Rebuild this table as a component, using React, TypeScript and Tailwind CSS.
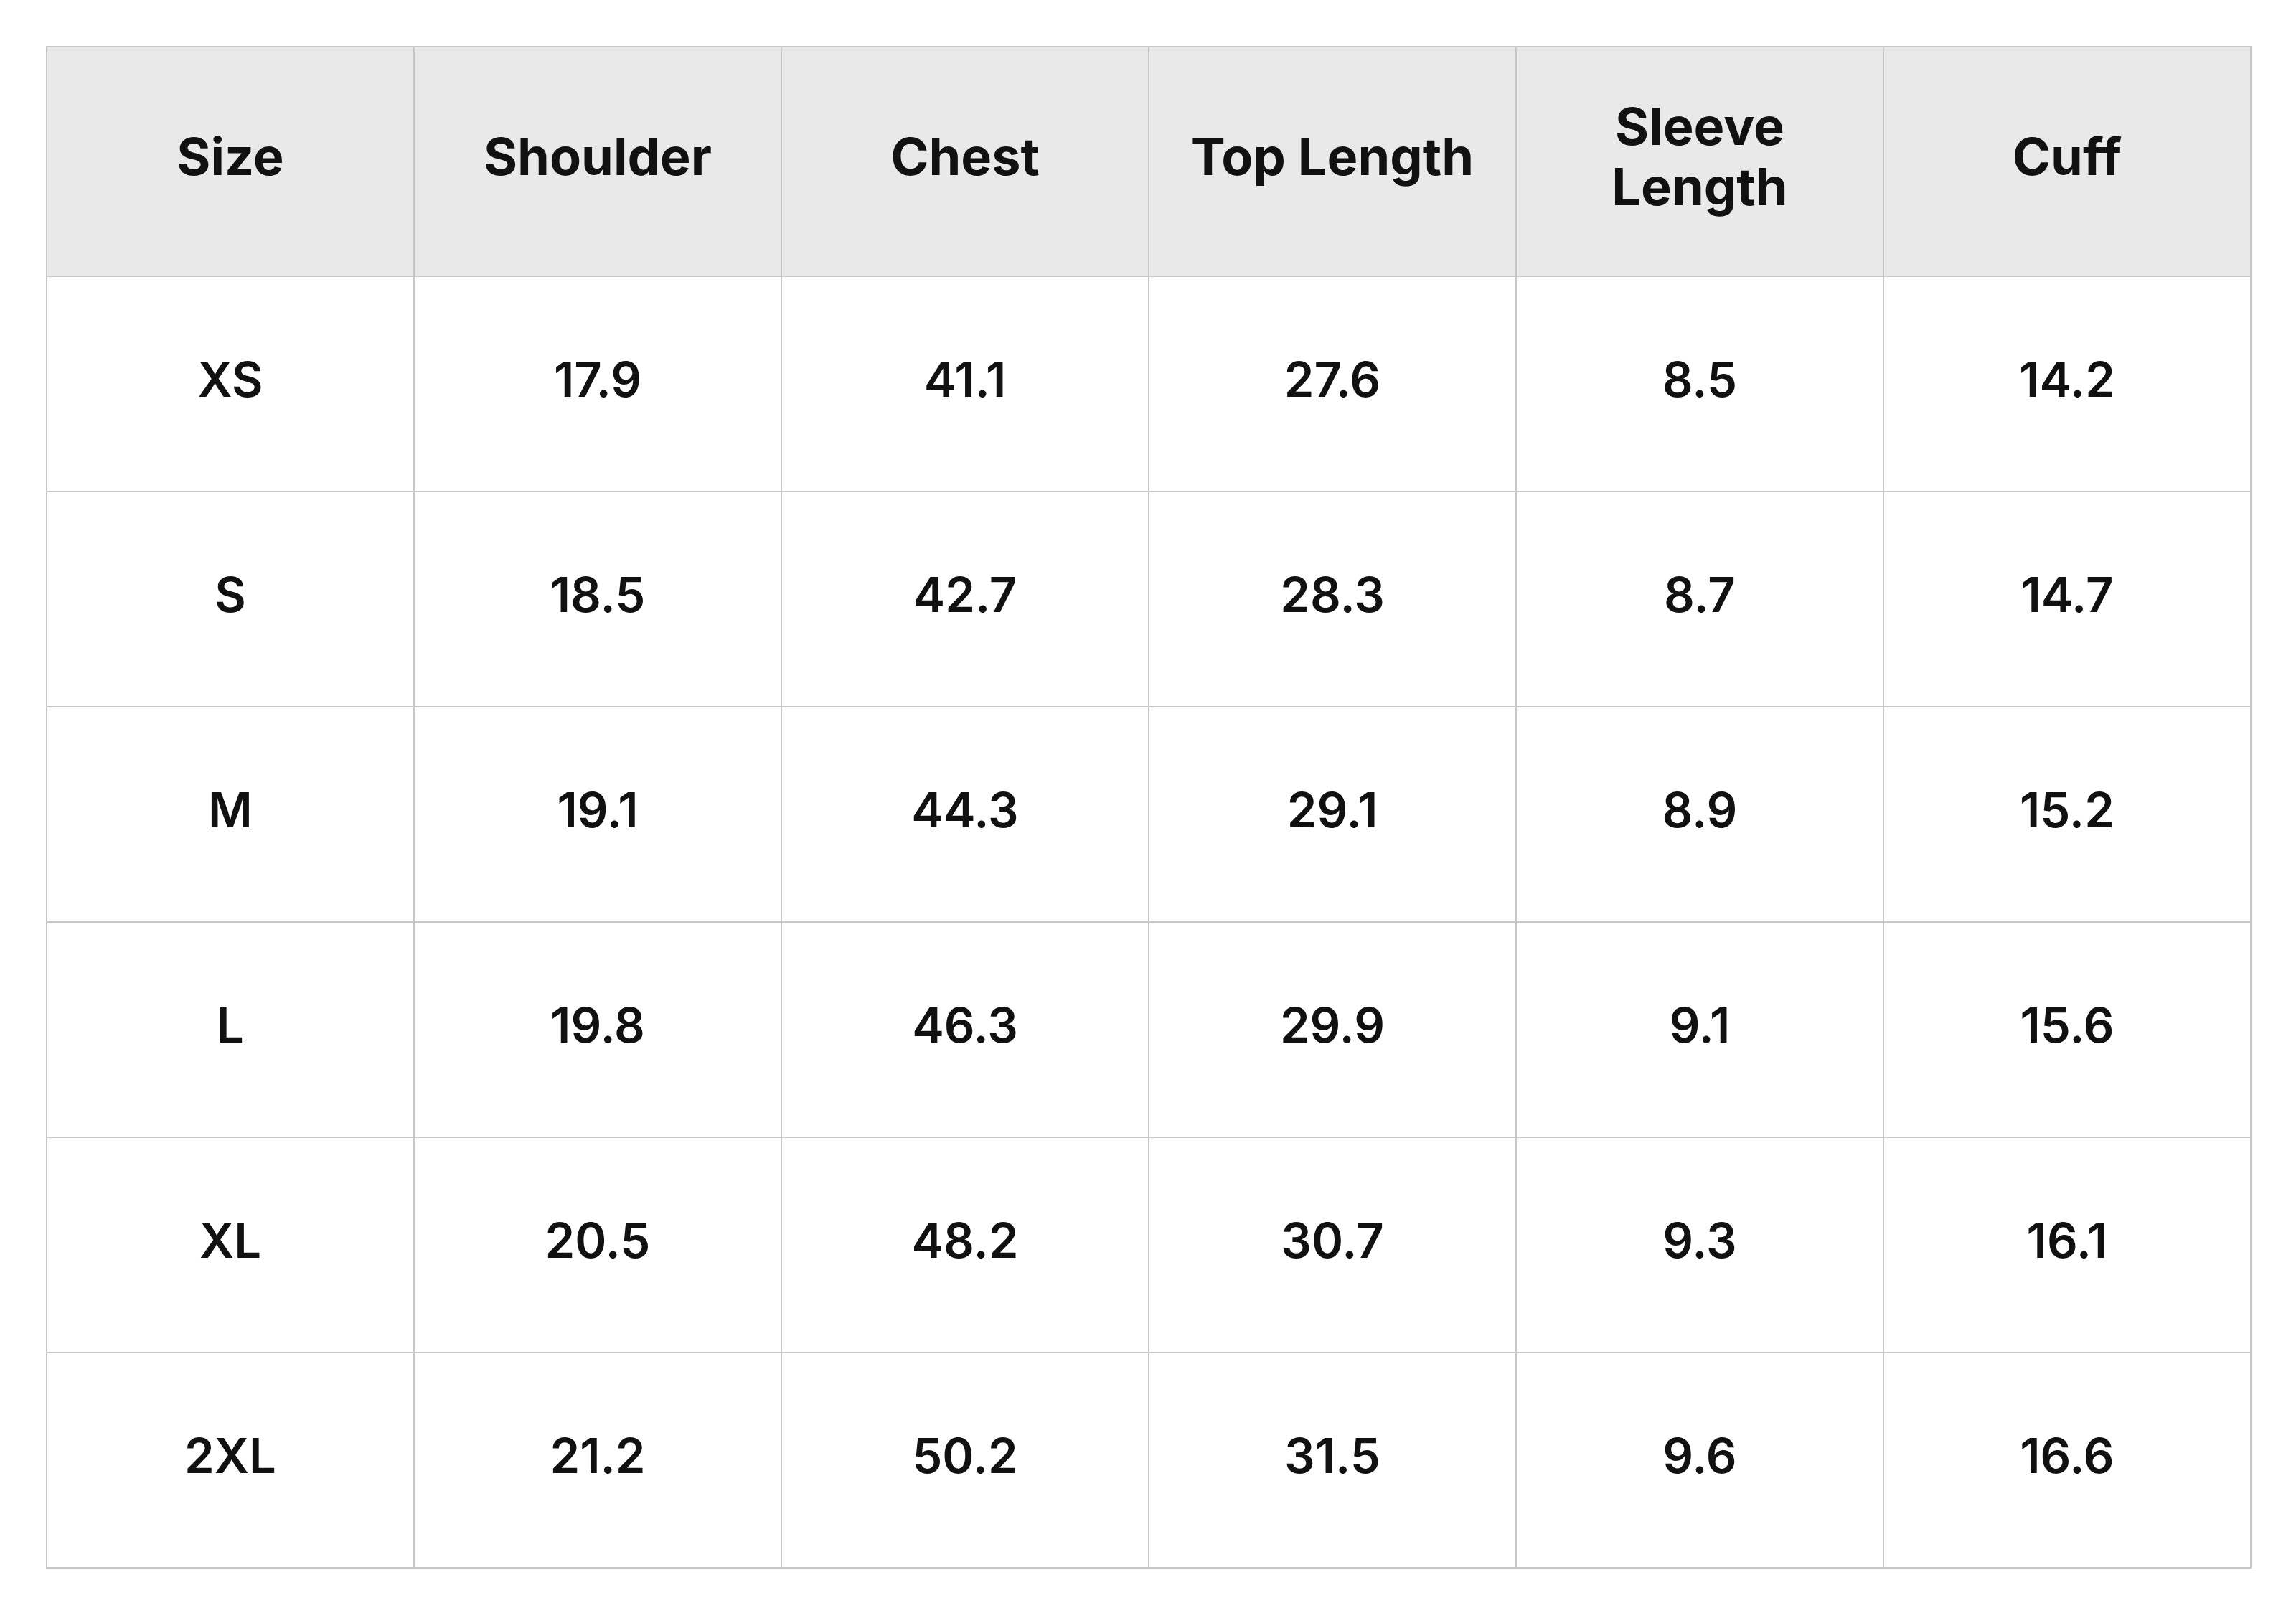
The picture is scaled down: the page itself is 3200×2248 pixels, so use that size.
import React from "react";

const headers: React.ReactNode[] = [
  "Size",
  "Shoulder",
  "Chest",
  "Top Length",
  <>
    Sleeve
    <br />
    Length
  </>,
  "Cuff",
];
const rows = [
  ["XS", "17.9", "41.1", "27.6", "8.5", "14.2"],
  ["S", "18.5", "42.7", "28.3", "8.7", "14.7"],
  ["M", "19.1", "44.3", "29.1", "8.9", "15.2"],
  ["L", "19.8", "46.3", "29.9", "9.1", "15.6"],
  ["XL", "20.5", "48.2", "30.7", "9.3", "16.1"],
  ["2XL", "21.2", "50.2", "31.5", "9.6", "16.6"],
];

export default function App() {
  return (
    <div className="w-[3200px] h-[2248px] bg-white pt-[64px] pl-[64px]" style={{ fontFamily: "Inter, 'Noto Sans', sans-serif" }}>
      <div className="w-[3074px] grid grid-cols-[repeat(6,510px)] gap-[2px] p-[2px] bg-[#c8c8c8] text-[#111111]">
        {headers.map((h, i) => (
          <div
            key={i}
            className="h-[318px] pb-[14px] bg-[#e9e9e9] flex items-center justify-center text-center whitespace-nowrap text-[72px] leading-[84px] font-bold"
          >
            <span>{h}</span>
          </div>
        ))}
        {rows.map((r, i) =>
          r.map((c, j) => (
            <div
              key={`${i}-${j}`}
              className="h-[298px] pb-[12px] bg-white flex items-center justify-center text-[67px] font-semibold"
            >
              {c}
            </div>
          ))
        )}
      </div>
    </div>
  );
}
